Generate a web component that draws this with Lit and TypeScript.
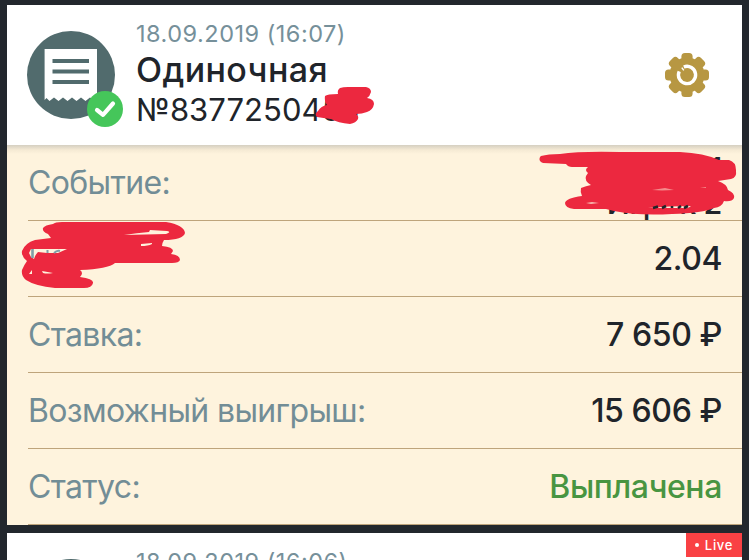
import { LitElement, html, css, svg } from 'lit';
import { customElement, property } from 'lit/decorators.js';

interface IBetRow {
    label: string;
    value: string[];
    kind?: string;
}

const ROWS: IBetRow[] = [
    { label: 'Событие:', value: ['1', 'Игрок 2'], kind: 'event' },
    { label: 'На', value: ['2.04'] },
    { label: 'Ставка:', value: ['7 650 ₽'] },
    { label: 'Возможный выигрыш:', value: ['15 606 ₽'] },
    { label: 'Статус:', value: ['Выплачена'], kind: 'paid' },
];

const gearTeeth = [0, 45, 90, 135, 180, 225, 270, 315];

@customElement('bet-header')
export class BetHeader extends LitElement {
    static override styles = css`
        :host {
            display: flex;
            box-sizing: border-box;
            height: 140px;
            padding: 13px 32px 0 20.4px;
            background: #fff;
        }
        .receipt {
            flex: none;
            width: 98px;
            height: 98px;
            margin-top: 12px;
        }
        .info {
            flex: 1;
            margin-left: 10.6px;
            white-space: nowrap;
            color: #20242a;
        }
        .date {
            font-size: 23.5px;
            line-height: 32px;
            letter-spacing: 0.5px;
            color: #76909a;
        }
        .title {
            font-size: 34px;
            font-weight: 500;
            line-height: 40px;
            letter-spacing: 0.4px;
        }
        .number {
            font-size: 31px;
            line-height: 40px;
            letter-spacing: 0.05px;
        }
        .gear {
            flex: none;
            width: 46px;
            height: 46px;
            margin-top: 34px;
        }
    `;

    @property() date = '';

    @property() heading = '';

    @property() number = '';

    override render() {
        return html`
            <svg class="receipt" viewBox="0 0 98 98">
                <circle cx="44" cy="45" r="44" fill="#516b6d" />
                <path
                    fill="#fff"
                    d="M17.6 19H70V68.5L67.5 70L63 67.4L58.5 71L54 67.4L49.5 71L45 67.4L40.5 71L36 67.4L31.5 71L27 67.4L22.5 71L19.5 68L17.6 70Z"
                />
                <path stroke="#516b6d" stroke-width="3.8" d="M25.5 31H62M25.5 41.5H62M25.5 52H62" />
                <circle cx="78" cy="79" r="18" fill="#45c65a" />
                <path
                    fill="none"
                    stroke="#fff"
                    stroke-width="4.2"
                    stroke-linecap="round"
                    stroke-linejoin="round"
                    d="M70 80L76 84.8L86 73.5"
                />
            </svg>
            <div class="info">
                <div class="date">${this.date}</div>
                <div class="title">${this.heading}</div>
                <div class="number">${this.number}</div>
            </div>
            <svg class="gear" viewBox="-23 -23 46 46">
                <g fill="#b79742">
                    <circle r="17.5" />
                    ${gearTeeth.map(
                        (a) => svg`<rect x="-5.6" y="-22" width="11.2" height="14" rx="3.5" transform="rotate(${a})" />`,
                    )}
                </g>
                <path
                    fill="none"
                    stroke="#fff"
                    stroke-width="3.4"
                    d="M-3.2 -8A8.6 8.6 0 1 1 -7.8 -3.6"
                />
                <path stroke="#fff" stroke-width="1.4" d="M-5.2 -7.4L-3.2 -4.6" />
            </svg>
        `;
    }
}

@customElement('app-root')
export class AppRoot extends LitElement {
    static override styles = css`
        :host {
            display: flex;
            flex-direction: column;
            gap: 8px;
            position: relative;
            box-sizing: border-box;
            height: 560px;
            padding: 5px 7px 0;
            overflow: hidden;
            background: #22272d;
            font-family: Inter, 'Liberation Sans', sans-serif;
        }
        .card {
            flex: none;
            position: relative;
            background: #fff;
        }
        .rows {
            height: 380px;
            padding-left: 21px;
            background: linear-gradient(#d5cfc1, #f5ead4 5px, #fef3dd 9px);
        }
        .row {
            display: flex;
            align-items: center;
            justify-content: space-between;
            box-sizing: border-box;
            height: 76px;
            padding-right: 20px;
            border-bottom: 1px solid #bea47b;
            font-size: 32px;
            line-height: 38px;
            white-space: nowrap;
        }
        .label {
            letter-spacing: -0.64px;
            color: #728d96;
        }
        .value {
            font-weight: 500;
            text-align: right;
            letter-spacing: -0.4px;
            color: #20242a;
        }
        .event {
            padding-top: 4px;
            font-size: 30.5px;
            line-height: 35px;
        }
        .paid {
            color: #489541;
        }
        .live {
            position: absolute;
            top: 0;
            right: 0;
            box-sizing: border-box;
            display: flex;
            align-items: center;
            justify-content: center;
            gap: 6px;
            width: 56px;
            height: 24px;
            background: #f94144;
            font-size: 13px;
            font-weight: 500;
            letter-spacing: 0.7px;
            color: #fff;
        }
        .dot {
            width: 4px;
            height: 4px;
            border-radius: 50%;
            background: #fff;
        }
        .marker {
            position: absolute;
            top: 0;
            left: 0;
            width: 749px;
            height: 560px;
            pointer-events: none;
        }
    `;

    // Red marker strokes that hide the private values
    private _renderMarker() {
        return html`
            <svg class="marker" viewBox="0 0 749 560" fill="#ec283f">
                <path
                    d="M340 88Q343 87 348 87H366Q371 88 371 92Q370 96 367 98Q374 99 374 104Q373 110 367 112Q362 114 356 114Q359 116 358 119Q356 123 350 124Q338 123 331 119Q323 118 317 117Q314 114 318 111Q321 106 327 105Q324 101 325 96Q327 94 338 94Q337 90 340 88Z"
                />
                <path
                    d="M541 156Q548 154 560 154Q580 151 620 152H680Q704 153 719 160H729Q736 162 736 170Q737 178 731 179L718 181Q727 184 728 190Q735 193 734 198Q732 202 724 201Q722 207 714 208Q703 213 672 214Q638 216 614 211L606 209H574Q565 208 565 203Q566 198 582 196Q580 192 581 188Q586 186 591 185Q584 181 586 176L588 173Q584 170 588 167H572Q568 167 566 164L543 163Q538 161 540 157Z"
                />
                <path
                    d="M53 224Q55 222 62 222H166Q184 225 185 233Q183 240 164 240Q162 243 162 246Q173 247 173 251L171 254Q180 255 180 260Q179 263 172 263H115Q108 269 80 270Q84 273 80 277Q94 279 93 283Q92 288 84 288H55Q35 286 26 280Q21 276 22 270Q24 265 27 261Q21 256 22 251Q25 243 35 240L51 238L48 234Q42 232 43 228Q45 225 53 224Z"
                />
                <path fill="#fef3dd" d="M150 230L167 231Q172 232 166 234L124 235Q137 233 149 232Z" />
                <path fill="#fef3dd" d="M141 244L152 243V244Q148 246 141 246Z" />
                <path fill="#fef3dd" d="M31 249H67L58 253H47L38 252Q35 255 34 259L31 257L29 253Z" />
                <path fill="#fef3dd" d="M29 274L32 270L32 274Z" />
                <path fill="#fef3dd" d="M42 271L53 273Q47 274 43 273Z" />
                <path stroke="#7f9fa8" stroke-width="2.6" d="M32.5 249V258" />
                <path stroke="#7f9fa8" stroke-width="2" fill="none" d="M47.5 250V253M54 253Q57 250 60 251" />
                <path fill="#f7b5ad" d="M586 203L592 202L599 203L591 204Z" />
                <path fill="#f58b8c" d="M652 190L665 188L674 190L662 190.5Z" />
                <path fill="#f58b8c" d="M700 188L706 187V188Z" />
                <path fill="#fef3dd" d="M648 208Q669 206 691 206L688 208Z" />
                <path
                    fill="none"
                    stroke="#20242a"
                    stroke-width="2.6"
                    d="M653 208L658 206.5M662 208L666 206M672 208V206M678 208L681 206M684 208L688 206"
                />
            </svg>
        `;
    }

    override render() {
        return html`
            <div class="card">
                <bet-header date="18.09.2019 (16:07)" heading="Одиночная" number="№8377250455"></bet-header>
                <div class="rows">
                    ${ROWS.map(
                        (row) => html`
                            <div class="row">
                                <div class="label">${row.label}</div>
                                <div class="value ${row.kind ?? ''}">
                                    ${row.value.map((line) => html`<div>${line}</div>`)}
                                </div>
                            </div>
                        `,
                    )}
                </div>
            </div>
            <div class="card">
                <bet-header date="18.09.2019 (16:06)" heading="Одиночная"></bet-header>
                <div class="live"><span class="dot"></span>Live</div>
            </div>
            ${this._renderMarker()}
        `;
    }
}
